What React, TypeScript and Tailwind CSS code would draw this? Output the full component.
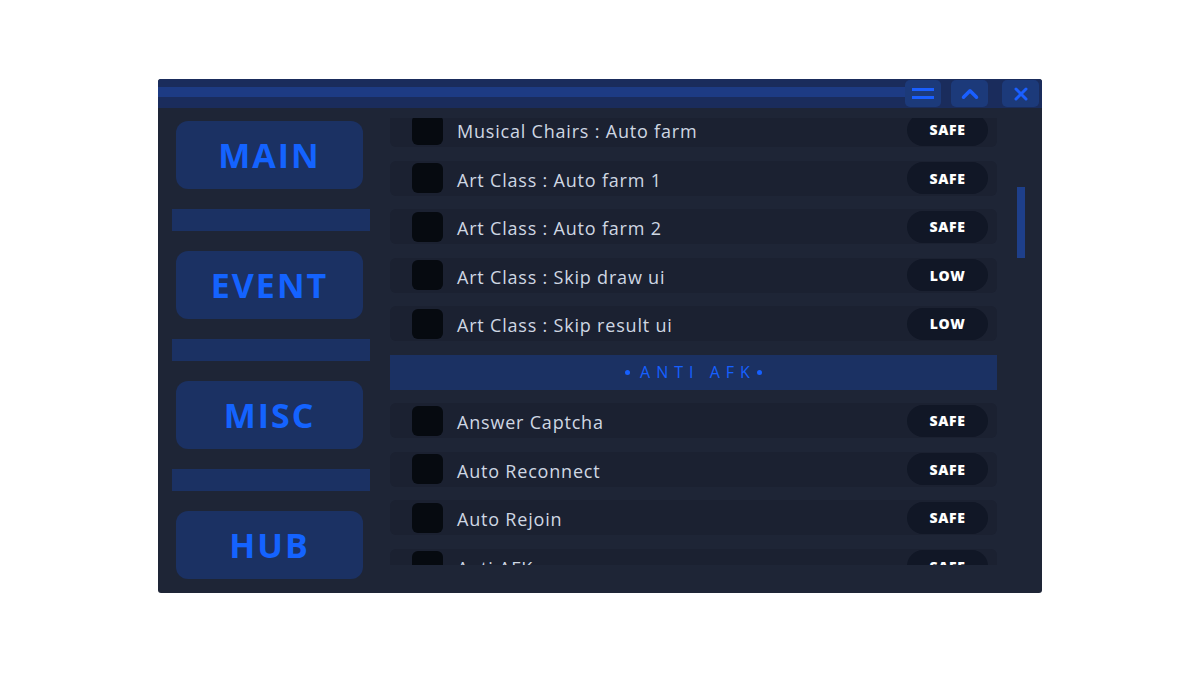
import { ChevronUp, X } from "lucide-react"

type Risk = "SAFE" | "LOW"

type Item = { kind: "toggle"; label: string; risk: Risk } | { kind: "section"; label: string }

const items: Item[] = [
  { kind: "toggle", label: "Musical Chairs : Auto farm", risk: "SAFE" },
  { kind: "toggle", label: "Art Class : Auto farm 1", risk: "SAFE" },
  { kind: "toggle", label: "Art Class : Auto farm 2", risk: "SAFE" },
  { kind: "toggle", label: "Art Class : Skip draw ui", risk: "LOW" },
  { kind: "toggle", label: "Art Class : Skip result ui", risk: "LOW" },
  { kind: "section", label: "ANTI AFK" },
  { kind: "toggle", label: "Answer Captcha", risk: "SAFE" },
  { kind: "toggle", label: "Auto Reconnect", risk: "SAFE" },
  { kind: "toggle", label: "Auto Rejoin", risk: "SAFE" },
  { kind: "toggle", label: "Anti AFK", risk: "SAFE" },
]

const tabs = ["MAIN", "EVENT", "MISC", "HUB"]

function TabButton({ label }: { label: string }) {
  return (
    <button className="h-[68px] w-[187px] ml-[4px] rounded-[12px] bg-[#1b3163] text-[#1463ff] text-[34px] font-bold tracking-[2px] flex items-center justify-center">
      {label}
    </button>
  )
}

function ToggleRow({ label, risk }: { label: string; risk: Risk }) {
  return (
    <div className="h-[35px] shrink-0 rounded-[6px] bg-[#1b2131] flex items-center pl-[22px] pr-[9px]">
      <div className="w-[31px] h-[30px] rounded-[6px] bg-[#060a10]" />
      <span className="ml-[14px] mt-[4px] text-[18px] text-[#cfd7e3] tracking-[0.8px]">{label}</span>
      <span className="ml-auto w-[81px] h-[32px] rounded-full bg-[#111726] text-white text-[14px] font-extrabold flex items-center justify-center tracking-[0.6px]">
        {risk}
      </span>
    </div>
  )
}

function SectionRow({ label }: { label: string }) {
  return (
    <div className="h-[35px] shrink-0 bg-[#1b3163] flex items-center justify-center text-[#1660ff] text-[16px] font-medium tracking-[6px]">
      <span className="w-[5px] h-[5px] rounded-full bg-[#1660ff] mr-[10px]" />
      {label}
      <span className="w-[5px] h-[5px] rounded-full bg-[#1660ff] ml-[1px]" />
    </div>
  )
}

export default function App() {
  return (
    <div className="w-[1200px] h-[675px] bg-white flex items-start justify-start" style={{ fontFamily: '"Open Sans", "Liberation Sans", sans-serif' }}>
      <div className="mt-[79px] ml-[158px] w-[884px] h-[514px] rounded-[3px] overflow-hidden bg-[#1e2536] flex flex-col">
        {/* title bar */}
        <div className="h-[29px] bg-[#1a2c5c] flex items-center">
          <div className="flex-1 h-[10px] bg-[#1d3b84] -mt-[3px]" />
          <div className="flex items-center gap-[10px] pr-[3px]">
            <button className="w-[36px] h-[27px] rounded-[5px] bg-[#1c3a7a] flex flex-col items-center justify-center gap-[5px]">
              <span className="w-[22px] h-[3px] bg-[#1a5fff]" />
              <span className="w-[22px] h-[3px] bg-[#1a5fff]" />
            </button>
            <button className="w-[37px] h-[27px] rounded-[5px] bg-[#1c3a7a] flex items-center justify-center">
              <ChevronUp size={26} strokeWidth={3.2} className="text-[#1a5fff]" />
            </button>
            <button className="ml-[4px] w-[37px] h-[27px] rounded-[5px] bg-[#1c3a7a] flex items-center justify-center">
              <X size={20} strokeWidth={3.6} className="text-[#1a5fff]" />
            </button>
          </div>
        </div>

        {/* body */}
        <div className="flex-1 flex">
          {/* side tabs */}
          <div className="w-[222px] pl-[14px] pt-[13px] flex flex-col gap-5">
            {tabs.map((t, i) => (
              <div key={t} className="flex flex-col gap-5">
                <TabButton label={t} />
                {i < tabs.length - 1 && <div className="h-[22px] w-[198px] bg-[#1b3163]" />}
              </div>
            ))}
          </div>

          {/* feature list, scrolled a few pixels down */}
          <div className="ml-[10px] mt-[10px] h-[447px] w-[607px] overflow-hidden">
            <div className="-mt-[6px] flex flex-col gap-[13.5px]">
              {items.map((it) =>
                it.kind === "section" ? (
                  <SectionRow key={it.label} label={it.label} />
                ) : (
                  <ToggleRow key={it.label} label={it.label} risk={it.risk} />
                )
              )}
            </div>
          </div>

          {/* scrollbar */}
          <div className="ml-[20px] w-[8px] pt-[79px]">
            <div className="h-[71px] w-[8px] bg-[#1e3f8a]" />
          </div>
        </div>
      </div>
    </div>
  )
}
